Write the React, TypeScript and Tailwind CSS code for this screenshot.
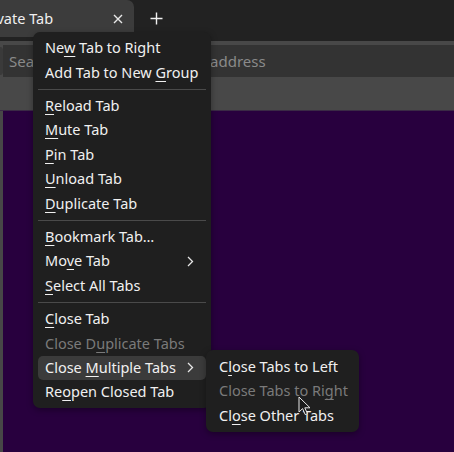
import React from 'react'

// Tab context menu over a dark browser window

type Entry =
  | { kind: 'sep' }
  | { kind: 'item'; pre: string; u: string; post: string; disabled?: boolean; sub?: boolean; active?: boolean }

const it = (pre: string, u: string, post: string, extra: Partial<Extract<Entry, { kind: 'item' }>> = {}): Entry => ({
  kind: 'item',
  pre,
  u,
  post,
  ...extra,
})

const MENU: Entry[] = [
  it('Ne', 'w', ' Tab to Right'),
  it('Add Tab to New ', 'G', 'roup'),
  { kind: 'sep' },
  it('', 'R', 'eload Tab'),
  it('', 'M', 'ute Tab'),
  it('', 'P', 'in Tab'),
  it('', 'U', 'nload Tab'),
  it('', 'D', 'uplicate Tab'),
  { kind: 'sep' },
  it('', 'B', 'ookmark Tab…'),
  it('Mo', 'v', 'e Tab', { sub: true }),
  it('', 'S', 'elect All Tabs'),
  { kind: 'sep' },
  it('', 'C', 'lose Tab'),
  it('Close D', 'u', 'plicate Tabs', { disabled: true }),
  it('Close ', 'M', 'ultiple Tabs', { sub: true, active: true }),
  it('Re', 'o', 'pen Closed Tab'),
]

const SUBMENU: Entry[] = [
  it('C', 'l', 'ose Tabs to Left'),
  it('Close Tabs to Ri', 'g', 'ht', { disabled: true }),
  it('Cl', 'o', 'se Other Tabs'),
]

function Chevron() {
  return (
    <svg width="7" height="11" viewBox="0 0 7 11" className="shrink-0">
      <path d="M1 1l4.5 4.5L1 10" fill="none" stroke="#e6e6e6" strokeWidth="1.3" />
    </svg>
  )
}

function MenuList({ entries, px }: { entries: Entry[]; px: string }) {
  return (
    <>
      {entries.map((e, i) =>
        e.kind === 'sep' ? (
          <div key={i} className="h-[9px] flex items-center">
            <div className="h-px w-full bg-[#4a4a4a]" />
          </div>
        ) : (
          <div
            key={i}
            className={`h-[24.4px] flex items-center justify-between rounded-[5px] ${px} ${
              e.active ? 'bg-[#3b3b3b]' : ''
            } ${e.disabled ? 'text-[#7a7a7a]' : 'text-[#f0f0f0]'}`}
          >
            <span className="whitespace-nowrap">
              {e.pre}
              <span className="underline decoration-1 underline-offset-[3px]">{e.u}</span>
              {e.post}
            </span>
            {e.sub && <Chevron />}
          </div>
        ),
      )}
    </>
  )
}

export default function App() {
  return (
    <div
      className="relative w-[454px] h-[452px] overflow-hidden bg-[#28003e] flex flex-col text-[14.5px]"
      style={{ fontFamily: '"Noto Sans", "DejaVu Sans", sans-serif' }}
    >
      {/* Tab strip */}
      <div className="h-[41px] shrink-0 bg-[#222222] flex items-start">
        <div className="h-[37px] w-[156px] -ml-[22px] bg-[#3c3c3c] rounded-tr-[7px] flex items-center pr-[8px]">
          <span className="flex-1 text-[#f0f0f0] whitespace-nowrap">Private Tab</span>
          <svg width="10" height="10" viewBox="0 0 10 10" className="mr-[3px]">
            <path d="M1 1l8 8M9 1l-8 8" stroke="#e8e8e8" strokeWidth="1.4" />
          </svg>
        </div>
        <div className="h-[37px] w-[44px] flex items-center justify-center">
          <svg width="13" height="13" viewBox="0 0 13 13">
            <path d="M6.5 0.5v12M0.5 6.5h12" stroke="#f0f0f0" strokeWidth="1.4" />
          </svg>
        </div>
      </div>

      {/* Toolbar */}
      <div className="h-[69px] shrink-0 bg-[#484848] pt-[4px] flex flex-col">
        <div className="h-[32px] flex">
          <div className="w-[3px] bg-[#3a3a3a] rounded-r-[3px] my-[2px]" />
          <div className="flex-1 bg-[#333333] flex items-center pl-[6px] text-[#8a8a8a] whitespace-nowrap text-[15px]">
            Search with Google or enter address
          </div>
        </div>
      </div>

      {/* Page content */}
      <div className="flex-1 flex border-t border-[#3a2a45]">
        <div className="w-[3px] bg-[#474747]" />
        <div className="flex-1 bg-[#28003e]" />
      </div>

      {/* Context menu */}
      <div className="absolute left-[33px] top-[32px] w-[178px] bg-[#1f1f1f] rounded-[7px] px-[5px] py-[4px] shadow-[0_2px_6px_rgba(0,0,0,0.35)]">
        <MenuList entries={MENU} px="pl-[7px] pr-[12px]" />
      </div>

      {/* Submenu */}
      <div className="absolute left-[206px] top-[350px] w-[153px] bg-[#1f1f1f] rounded-[7px] px-[5px] py-[4.6px] shadow-[0_2px_6px_rgba(0,0,0,0.35)]">
        <MenuList entries={SUBMENU} px="px-[8px]" />
      </div>

      {/* Mouse pointer */}
      <svg width="14" height="20" viewBox="0 0 14 20" className="absolute left-[298px] top-[396px]">
        <path d="M1 1v15l3.6-3.4 2.6 6 2.2-1-2.6-5.8H12z" fill="#1a1a1a" stroke="#e8e8e8" strokeWidth="1" strokeLinejoin="round" />
      </svg>
    </div>
  )
}
